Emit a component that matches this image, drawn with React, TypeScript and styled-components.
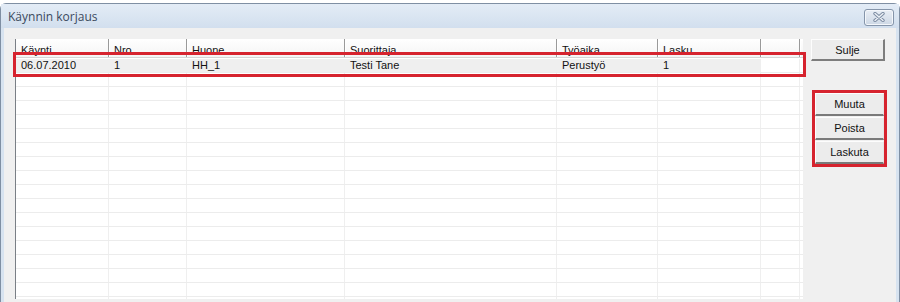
import React from "react";
import styled, { createGlobalStyle } from "styled-components";

const GlobalStyle = createGlobalStyle`
  html, body {
    margin: 0;
    padding: 0;
    background: #ffffff;
  }
`;

const Screen = styled.div`
  width: 900px;
  height: 302px;
  overflow: hidden;
  background: #ffffff;
  padding-top: 3px;
  box-sizing: border-box;
`;

const Window = styled.div`
  display: flex;
  flex-direction: column;
  height: 299px;
  border: 1px solid #7f8fa3;
  border-bottom: none;
  border-radius: 6px 6px 0 0;
  background: #d7e3f0;
  box-sizing: border-box;
`;

const TitleBar = styled.div`
  display: flex;
  align-items: center;
  justify-content: space-between;
  height: 24px;
  padding: 0 5px 0 7px;
  background: linear-gradient(#e3ecf6, #d2dfee);
  font-family: "Open Sans", "Noto Sans", sans-serif;
  font-size: 12px;
  color: #3b4a5e;
`;

const CloseButton = styled.div`
  display: flex;
  align-items: center;
  justify-content: center;
  width: 28px;
  height: 15px;
  margin-top: 2px;
  border: 1px solid #8595aa;
  border-radius: 3px;
  background: linear-gradient(#e9eef5, #cdd8e5);
  box-shadow: inset 0 0 0 1px #f4f7fb;
`;

const Client = styled.div`
  flex: 1;
  display: flex;
  align-items: flex-start;
  gap: 8px;
  margin: 0 3px;
  padding: 11px 0 0 11px;
  background: #f0f0f0;
  font-family: "Liberation Sans", Arial, sans-serif;
  font-size: 11px;
  color: #111;
`;

const ListView = styled.div`
  position: relative;
  width: 788px;
  height: 260px;
  background: #ffffff;
  border-left: 1px solid #7a7f86;
  box-sizing: border-box;
`;

const Grid = styled.div`
  height: 100%;
  overflow: hidden;
`;

const cols = [93, 78, 158, 212, 101, 103, 39];

const HeaderRow = styled.div`
  display: flex;
  height: 19px;
  background: linear-gradient(#ffffff, #f4f4f4);
  border-bottom: 1px solid #d5d5d5;
  box-sizing: border-box;
`;

const HeaderCell = styled.div<{ $w: number }>`
  width: ${(p) => p.$w}px;
  flex-shrink: 0;
  padding: 5px 0 0 5px;
  box-sizing: border-box;
  border-right: 1px solid #9a9a9a;
  box-shadow: 1px 0 0 #ffffff;
  white-space: nowrap;
  overflow: hidden;
`;

const Row = styled.div`
  display: flex;
  height: 14px;
  border-bottom: 1px solid #ececec;
  box-sizing: border-box;
`;

const Cell = styled.div<{ $w: number; $sel?: boolean }>`
  width: ${(p) => p.$w}px;
  flex-shrink: 0;
  padding: 0 0 0 5px;
  box-sizing: border-box;
  line-height: 13px;
  border-right: 1px solid #efefef;
  background: ${(p) => (p.$sel ? "#efefef" : "transparent")};
  white-space: nowrap;
  overflow: hidden;
`;

const FirstRow = styled(Row)`
  height: 15px;
  padding-top: 1px;
`;

const Mark = styled.div`
  position: absolute;
  border: 3px solid #d6232e;
  box-sizing: border-box;
  pointer-events: none;
`;

const RowMark = styled(Mark)`
  left: -3px;
  top: 13px;
  width: 793px;
  height: 25px;
`;

const Side = styled.div`
  display: flex;
  flex-direction: column;
  gap: 29px;
`;

const Button = styled.div<{ $w?: number }>`
  display: flex;
  align-items: center;
  justify-content: center;
  width: ${(p) => p.$w ?? 74}px;
  height: 22px;
  background: #ececec;
  border-top: 1px solid #fdfdfd;
  border-left: 1px solid #fdfdfd;
  border-right: 2px solid #7d7d7d;
  border-bottom: 2px solid #7d7d7d;
  box-sizing: border-box;
`;

const ButtonGroup = styled.div`
  position: relative;
  display: flex;
  flex-direction: column;
  gap: 1px;
  width: 75px;
  margin-left: 1px;
  padding: 3px;
  box-sizing: border-box;
`;

const GroupMark = styled(Mark)`
  inset: 0;
`;

const StackButton = styled(Button)`
  width: 69px;
  height: 23px;
  border-right: 1px solid #e4e4e4;
  border-bottom: 2px solid #7a7a7a;
`;

const headers = ["Käynti", "Nro", "Huone", "Suorittaja", "Työaika", "Lasku", ""];
const first = ["06.07.2010", "1", "HH_1", "Testi Tane", "Perustyö", "1", ""];

const App: React.FC = () => {
  const empty = Array.from({ length: 17 });

  return (
    <>
      <GlobalStyle />
      <Screen>
        <Window>
          <TitleBar>
            <span>Käynnin korjaus</span>
            <CloseButton>
              <svg width="14" height="10" viewBox="0 0 14 10">
                <path
                  d="M3 1.5 L11 8.5 M11 1.5 L3 8.5"
                  stroke="#7d8da3"
                  strokeWidth="3.4"
                  strokeLinecap="round"
                />
                <path
                  d="M3 1.5 L11 8.5 M11 1.5 L3 8.5"
                  stroke="#eef2f7"
                  strokeWidth="1.4"
                  strokeLinecap="round"
                />
              </svg>
            </CloseButton>
          </TitleBar>
          <Client>
            <ListView>
              <Grid>
                <HeaderRow>
                  {headers.map((h, i) => (
                    <HeaderCell key={i} $w={cols[i]}>
                      {h}
                    </HeaderCell>
                  ))}
                </HeaderRow>
                <FirstRow>
                  {first.map((v, i) => (
                    <Cell key={i} $w={cols[i]} $sel={i < 6}>
                      {v}
                    </Cell>
                  ))}
                </FirstRow>
                {empty.map((_, r) => (
                  <Row key={r}>
                    {cols.map((w, i) => (
                      <Cell key={i} $w={w} />
                    ))}
                  </Row>
                ))}
              </Grid>
              <RowMark />
            </ListView>
            <Side>
              <Button>Sulje</Button>
              <ButtonGroup>
                <StackButton>Muuta</StackButton>
                <StackButton>Poista</StackButton>
                <StackButton>Laskuta</StackButton>
                <GroupMark />
              </ButtonGroup>
            </Side>
          </Client>
        </Window>
      </Screen>
    </>
  );
};

export default App;
